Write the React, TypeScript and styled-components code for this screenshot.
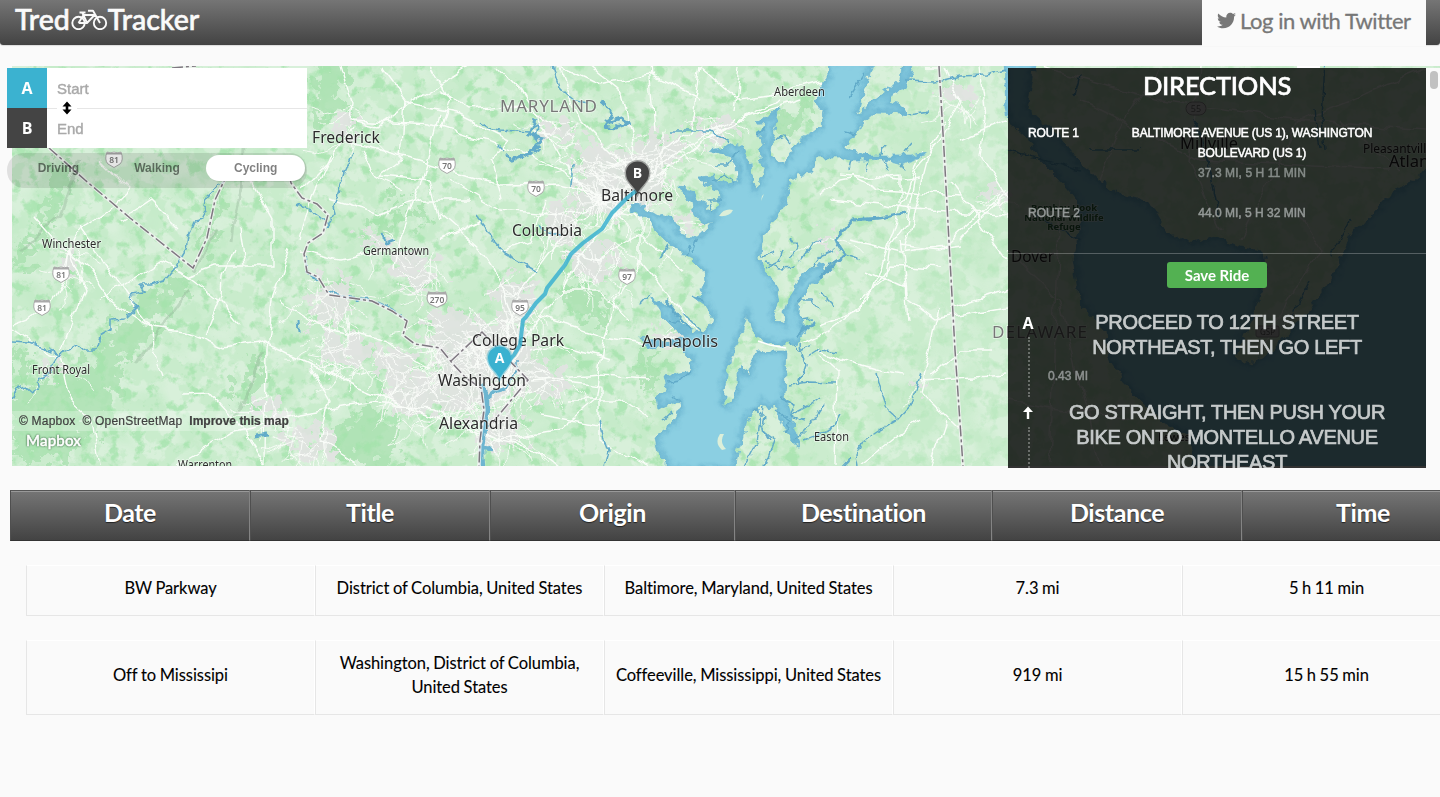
import React from "react";
import styled, { createGlobalStyle, css } from "styled-components";
import { FaTwitter } from "react-icons/fa";

const GlobalStyle = createGlobalStyle`
  * { box-sizing: border-box; }
  html, body { margin: 0; padding: 0; background: #fafafa; overflow: hidden; }
  body { font-family: Lato, "Liberation Sans", sans-serif; color: #000; font-variant-ligatures: none; }
`;

const helvetica = `"Liberation Sans", Arial, sans-serif`;

const Page = styled.div`
  height: 797px;
  width: 1440px;
  overflow: hidden;
`;

const Header = styled.header`
  display: flex;
  justify-content: space-between;
  height: 45px;
  padding: 0 14px 0 15px;
  background: linear-gradient(#757575, #434343);
  border-radius: 0 0 3px 3px;
  box-shadow: 0 1px 1px rgba(0, 0, 0, 0.12);
`;

const Brand = styled.a`
  display: flex;
  align-items: flex-start;
  height: 40px;
  font-size: 28.5px;
  line-height: 39px;
  font-weight: 500;
  color: #fafafa;
  -webkit-text-stroke: 0.6px #fafafa;
`;

const BikeIcon = styled.svg`
  width: 37px;
  height: 22px;
  margin: 8px 0 0 1px;
  fill: none;
  stroke: #fafafa;
`;

const LoginTab = styled.a`
  display: flex;
  align-items: center;
  gap: 4px;
  width: 224px;
  height: 46px;
  padding: 0 0 5px 15px;
  background: #fafafa;
  color: #777;
  font-size: 22px;
  letter-spacing: -0.46px;
  white-space: nowrap;
  -webkit-text-stroke: 0.3px #777;
`;

const MapStage = styled.section`
  position: relative;
  height: 400px;
  margin: 21px 0 0 12px;
`;

const MapCanvas = styled.svg`
  display: block;
  width: 1428px;
  height: 400px;
  font-family: "Noto Sans", sans-serif;
`;

const Inputs = styled.div`
  position: absolute;
  left: -5px;
  top: 2px;
  width: 300px;
`;

const InputRow = styled.label`
  display: flex;
  height: 40px;
  background: #fff;
  & + & > span:last-child { border-top: 1px solid #e6e6e6; line-height: 39px; }
`;

const Letter = styled.span<{ $color: string }>`
  width: 40px;
  background: ${(p) => p.$color};
  color: #fff;
  font: bold 16px/40px "Open Sans", sans-serif;
  text-align: center;
`;

const Placeholder = styled.span`
  flex: 1;
  padding-left: 10px;
  font: 15px/41px ${helvetica};
  color: #a9a9a9;
  -webkit-text-stroke: 0.4px #a9a9a9;
`;

const SwapIcon = styled.svg`
  position: absolute;
  left: 50px;
  top: 30px;
  width: 20px;
  height: 20px;
  background: #fff;
`;

const Modes = styled.div`
  display: flex;
  height: 35px;
  margin-top: 5px;
  padding: 2px;
  border-radius: 17px;
  background: rgba(0, 0, 0, 0.1);
`;

const Mode = styled.span<{ $active?: boolean }>`
  flex: 1;
  height: 26px;
  border-radius: 13px;
  text-align: center;
  font: bold 12px/26px ${helvetica};
  color: rgba(0, 0, 0, 0.5);
  ${(p) => p.$active && css`background: #fff; box-shadow: 1px 1px 1px rgba(0,0,0,.1);`}
`;

const Attribution = styled.div`
  position: absolute;
  left: 0;
  top: 345px;
  display: flex;
  gap: 7px;
  width: 283px;
  height: 20px;
  padding-left: 7px;
  background: rgba(255, 255, 255, 0.25);
  font: 12px/20px ${helvetica};
  letter-spacing: 0.2px;
  color: #404040;
  white-space: nowrap;
  -webkit-text-stroke: 0.2px #404040;
  b { letter-spacing: 0; }
`;

const Logo = styled.div`
  position: absolute;
  left: 14px;
  top: 365px;
  font: 500 15px/18px Lato, sans-serif;
  color: #fff;
  letter-spacing: 0.2px;
  -webkit-text-stroke: 0.5px #fff;
  text-shadow: 0 0 2px #5d8663, 0 0 2px #5d8663, 0 0 2px #6c9a72, 0 0 2px #6c9a72;
`;

const ScrollTrack = styled.div`
  position: absolute;
  left: 1414px;
  top: 2px;
  width: 14px;
  height: 400px;
  padding: 3px;
  background: #fafafa;
  &::before {
    content: "";
    display: block;
    width: 8px;
    height: 18px;
    margin-left: 1px;
    border-radius: 4px;
    background: #c1c1c1;
  }
`;

const Panel = styled.aside`
  position: absolute;
  left: 996px;
  top: 2px;
  width: 418px;
  height: 400px;
  overflow: hidden;
  background: rgba(0, 0, 0, 0.8);
  color: #fff;
  text-transform: uppercase;
`;

const PanelTitle = styled.h2`
  margin: 0;
  height: 55px;
  font: 500 25.5px/35px Lato, sans-serif;
  letter-spacing: -0.2px;
  text-align: center;
  -webkit-text-stroke: 0.6px #fff;
`;

const Route = styled.div<{ $active?: boolean }>`
  display: flex;
  height: ${(p) => (p.$active ? 80 : 50)}px;
  padding-left: 20px;
  font: 12px/20px ${helvetica};
  letter-spacing: ${(p) => (p.$active ? "-0.17px" : "0")};
  color: ${(p) => (p.$active ? "#fff" : "#939896")};
  -webkit-text-stroke: 0.5px currentColor;
  em { display: block; font-style: normal; color: #858b88; letter-spacing: 0.08px; }
`;

const RouteName = styled.span`
  width: 90px;
`;

const RouteText = styled.span`
  width: 268px;
  text-align: center;
  white-space: nowrap;
`;

const SaveBar = styled.div`
  display: flex;
  justify-content: center;
  height: 54px;
  padding-top: 8px;
  border-top: 1px solid rgba(255, 255, 255, 0.25);
`;

const SaveButton = styled.button`
  width: 100px;
  height: 26px;
  padding: 0;
  border: 0;
  border-radius: 3px;
  background: #53b152;
  color: #fff;
  font: bold 15px/26px Lato, sans-serif;
  letter-spacing: -0.05px;
`;

const Step = styled.div`
  display: flex;
  height: 90px;
  padding-left: 10px;
`;

const StepMark = styled.div`
  display: flex;
  flex-direction: column;
  align-items: center;
  width: 20px;
  padding-top: 6px;
  font: bold 16px/20px "Open Sans", sans-serif;
  &::after {
    content: "";
    flex: 1;
    margin: 4px 0 0 2px;
    border-left: 2px dotted rgba(255, 255, 255, 0.3);
  }
`;

const ArrowIcon = styled.svg`
  width: 20px;
  height: 20px;
  flex: none;
`;

const StepBody = styled.div`
  width: 378px;
`;

const StepText = styled.div`
  padding-top: 3px;
  font: 20px/25px ${helvetica};
  letter-spacing: -0.32px;
  color: #c6caca;
  text-align: center;
  white-space: nowrap;
  -webkit-text-stroke: 0.7px #c6caca;
`;

const StepLength = styled.div`
  margin: 6px 0 0 10px;
  font: 12px/20px ${helvetica};
  color: #8d9190;
  -webkit-text-stroke: 0.5px #8d9190;
`;

const TableHead = styled.div`
  display: flex;
  width: 1480px;
  height: 51px;
  margin: 24px 0 24px 10px;
`;

const HeadCell = styled.div<{ $width: number }>`
  flex: none;
  width: ${(p) => p.$width}px;
  border: 1px solid;
  border-color: #555 #848484 #333 #4f4f4f;
  background: linear-gradient(#757575, #434343);
  box-shadow: inset 0 1px 0 #999;
  font-size: 25px;
  font-weight: bold;
  line-height: 43px;
  color: #fff;
  text-align: center;
  text-shadow: 0 1px 1px rgba(0, 0, 0, 0.6);
  letter-spacing: -0.4px;
`;

const Row = styled.div<{ $height: number }>`
  display: flex;
  width: 1445px;
  height: ${(p) => p.$height}px;
  margin: 0 0 24px 26px;
`;

const Cell = styled.div`
  flex: none;
  display: flex;
  align-items: center;
  justify-content: center;
  width: 289px;
  padding: 0 8px 5px;
  border: 1px solid #e6e6e6;
  border-top-color: #fff;
  border-right-color: #fff;
  font-size: 16.5px;
  line-height: 24px;
  letter-spacing: -0.06px;
  word-spacing: -0.5px;
  text-align: center;
  -webkit-text-stroke: 0.1px #000;
`;

/* ---------- map geography ---------- */

const BAY =
  "M827 60L828 77 820 87 815 103 823 110 821 126 812 133 800 139 793 150 784 164 775 160 771 150 774 136 777 122 778 108 770 116 757 120 764 126 759 134 763 145 759 158 765 168 762 180 755 188 751 174 750 163 742 148 730 142 722 148 707 150 718 153 730 156 737 166 738 180 728 184 712 176 698 177 706 184 718 190 719 204 713 213 698 200 690 188 678 187 684 196 693 203 695 214 703 224 713 222 707 229 697 238 680 234 672 218 662 215 652 212 640 205 630 203 633 212 648 219 656 231 668 243 676 248 687 257 693 260 703 270 704 288 698 300 706 306 714 318 712 323 703 332 695 331 682 326 672 308 660 302 650 297 655 305 662 316 674 328 685 336 668 341 652 340 640 338 646 346 658 350 672 345 680 348 692 360 690 371 680 373 664 376 667 390 657 398 659 410 672 402 679 403 680 410 673 423 655 437 658 453 667 462 667 470 735 470 738 453 741 442 744 432 748 416 757 410 762 402 768 410 776 405 780 420 790 440 800 447 793 425 785 397 786 372 787 351 768 351 758 352 752 362 748 375 742 365 737 375 737 390 731 403 724 405 724 390 729 366 733 352 737 343 743 330 747 314 752 331 758 337 770 343 783 345 790 343 798 345 801 337 807 329 800 320 799 312 800 300 806 292 817 282 826 272 822 264 812 268 800 278 795 290 787 300 784 312 785 324 778 322 773 317 774 310 780 300 778 290 773 282 768 272 762 266 761 256 763 240 768 232 777 217 783 208 787 193 790 185 797 175 812 173 812 167 818 157 840 157 850 160 868 160 882 159 900 164 918 158 928 152 910 155 880 155 866 155 845 148 847 142 858 135 863 123 875 112 900 113 908 116 900 104 888 102 892 95 903 88 910 78 914 60 903 60 900 80 883 93 870 103 857 118 860 105 865 86 868 78 873 60Z";

const DEL =
  "M1004 60L1006 110 1008 120 1027 137 1040 160 1060 180 1077 200 1080 226 1073 260 1080 303 1107 332 1110 360 1130 390 1163 423 1190 437 1196 480 1445 480 1445 162 1426 170 1403 187 1387 197 1360 227 1353 230 1343 255 1330 280 1307 313 1273 350 1250 364 1235 358 1247 330 1267 280 1263 250 1240 247 1217 237 1190 243 1167 233 1150 203 1117 193 1083 167 1060 137 1027 110 1032 77 1037 60Z";

const RIVERS = [
  "M12 400L16 389 25 386 33 393 39 387 38 380 47 375 52 366 60 353 72 348 78 345 84 350 96 350 100 336 110 330 110 320 125 319 138 307 130 299 131 294 145 292 140 284 150 284 165 280 175 268 186 250 188 236 194 222 203 220 207 212 203 206 205 198 218 186 232 174 246 160",
  "M12 342L30 343 60 355", "M354 152L345 172 338 193 334 206 336 213 330 222 325 228",
  "M297 204L312 211 328 224", "M305 255L307 272 318 280", "M328 291L350 298 372 300 392 309 407 320",
  "M553 66L557 78 560 88 566 94 575 101 588 103", "M480 123L488 128 500 130 515 131 530 132 538 124 536 142",
  "M498 145L503 150 M476 215L487 229 493 240 505 253 520 262 538 272", "M670 131L690 131 710 131 730 141",
  "M538 225L548 233 560 235 M573 165L571 185 M600 420L604 440 608 452 604 466",
  "M820 276L832 263 845 255 860 260 M820 292L834 306",
  "M820 350L837 353 M877 373L881 390 888 410 897 418 M921 373L916 390 910 406 897 420 880 430 862 442 856 455 858 466",
  "M905 81L935 82 960 76 985 75 1006 70", "M795 440L810 425 824 405 M790 385L808 382 835 383 M790 415L808 406 820 397",
  "M800 345L805 365 798 385 M808 356L820 348 M775 410L790 420 785 432 M762 405L760 425 770 440",
  "M745 465L757 442 760 420 M765 466L775 438 M805 440L830 430 840 414 M850 458L843 466",
  "M703 332L692 322 683 313 M650 293L640 304 M703 300L692 296 M680 323L670 320",
  "M790 238L798 246 790 260 M800 261L812 244 820 240 M765 262L780 268 795 267 M850 96L865 74",
  "M908 115L930 112 M1008 150L1080 170 M1035 215L1080 240 M1315 110L1320 150 M1325 60L1322 120 1325 150 M1195 120L1210 170 1220 220",
  "M1075 95L1080 75 M1090 150L1140 150 M1290 320L1310 280 M1330 255L1350 220",
  "M690 371L680 380 668 382 M680 403L672 395 M672 412L663 420 M755 410L765 418 762 430 775 440 M780 398L795 405 790 415 805 420 M812 268L822 255 835 250",
  "M790 343L800 350 812 345 M797 300L810 300 820 310 M800 320L812 318 M762 256L775 252 M766 268L778 262 782 250 M868 160L866 172 M882 159L888 170 M900 164L905 172 M850 160L848 170 M905 152L912 144 M880 155L885 145 M845 132L858 136",
  "M738 150L728 165 715 165 M735 183L725 175 712 182 M713 213L708 200 722 200 M697 238L692 252 M686 257L690 244 M668 245L660 258 M765 128L758 135 M775 140L785 135 790 142",
];

const BORDERS = [
  "M49 148L85 180 130 218 193 268 207 238 215 200 231 166 240 160 252 164 288 171 291 183 302 198 317 204 328 215 323 233 308 243 304 254 307 272 318 277 329 295 372 301 392 311 407 321 403 335 415 344 440 348 453 364 466 378 481 388 484 410 480 440 479 466",
  "M172 68L196 66", "M451 361L482 332 528 380 493 422", "M939 66L944 150 950 260 955 350 963 466",
];

const ROADS = [
  "M12 326L28 320 52 302 64 280 68 250 76 234 110 210",
  "M33 215L62 248 90 270 110 300 151 328 185 332 222 347 260 341 310 364 360 387 430 415 500 440",
  "M151 328L80 228 M151 328L152 350 162 378 M12 330L30 342 60 356 70 400 92 420 100 466",
  "M68 250L85 290 62 350 M100 300L160 262 190 276 215 266 272 266 272 220 250 180",
  "M180 270L220 300 240 325 M233 250L222 275 221 295 205 336 M265 466L266 348 272 300 290 250",
  "M180 393L210 392 240 425 265 466 M175 466L230 433 300 415 372 402 430 407 500 440",
  "M340 66L352 105 350 120 378 126 408 104 380 66 M354 126L330 160 300 190 M345 142L420 160 500 185 560 184 620 198",
  "M352 120L430 124 500 145 560 170 600 195 M408 104L460 115 510 140 M408 104L470 66 M405 100L401 160 380 176 430 180 440 220",
  "M330 155L310 200 300 240 M360 150L375 175 400 190 M440 115L422 180 400 240 395 270",
  "M498 66L520 90 535 115 560 160 595 200 625 220 M700 66L740 100 770 96 820 82 M690 150L740 120 800 100 M625 190L690 145 735 118",
  "M637 190L632 140 620 90 590 66 M637 190L720 130 780 100 M600 200L560 240 520 290 505 340 490 380",
  "M637 200L600 230 578 260 558 296 530 330 505 375 M450 180L500 210 560 215 620 200",
  "M560 66L580 120 610 150 640 180 M440 215L480 250 500 280 520 340 M530 380L600 375 650 378",
  "M640 210L640 260 615 300 605 335 595 400 560 430 500 440 M640 260L680 310 705 340 M800 345L830 330 870 300 920 150",
  "M540 315L600 335 650 345 M560 250L600 260 640 235 680 270 M500 400L560 380 600 385 600 440 650 466 M540 415L600 425 M493 440L540 450 560 466",
  "M840 175L870 178 900 175 900 205 M820 195L840 180 850 178 M830 200L880 205 910 210 1008 215",
  "M945 66L960 100 940 140 915 170 905 225 890 245 885 280 860 300 M875 175L905 180 920 178 M980 66L986 120 981 155 1000 185 1008 200",
  "M820 325L860 310 890 265 940 268 M850 240L900 252 960 244 M900 240L908 300 935 320 1008 307 M865 270L905 288 M905 285L908 320",
  "M820 350L840 360 875 370 905 375 M925 66L940 66 M940 310L930 350 920 390 940 410 960 430 M820 355L837 370 835 466 M920 380L1008 375",
  "M850 175L880 190 960 195 M1000 195L940 250 900 245 M950 180L1008 260 M960 140L1008 120 M960 240L1008 190",
  "M945 120L930 150 905 250 M950 310L1008 290 M920 420L860 466 M945 420L930 466 M990 350L960 350 932 375",
  "M1040 66L1160 100 1300 120 1426 130 M1160 66L1120 130 1100 180 M1200 66L1190 160 1220 230 M1426 70L1300 120 1240 240 M1080 100L1200 160 1390 170",
  "M1008 250L1060 300 1100 466 M1060 200L1050 466 M1008 400L1130 420 M1340 120L1400 170 M1290 200L1320 250 1260 350",
  "M440 90L470 110 520 105 560 130 M430 66L450 100 440 130 M560 66L600 85 650 75 700 100 M650 66L655 130 M700 66L690 130 640 170 M740 66L735 110 M120 220L150 200 180 230 M100 160L130 190 110 210",
  "M280 300L330 330 380 340 430 370 M300 250L340 260 390 250 M330 200L380 215 420 200 470 200 M240 230L245 265 M310 364L330 400 320 440 360 466",
  "M530 350L560 345 610 360 M570 400L620 400 650 420 M560 290L600 290 630 320 M500 200L490 160 510 140 M545 200L530 240 500 250 M440 240L480 220",
];

const PARKS = [
  "M315 66L350 66 345 90 330 115 325 130 315 115Z", "M140 300L185 270 195 282 160 320 120 365 95 380 80 370Z",
  "M12 345L30 355 30 380 12 390Z", "M560 290L590 287 605 300 605 325 590 325 565 305Z", "M776 117L812 100 814 115 798 132 785 136Z",
  "M410 200L430 210 428 226 410 215Z M375 215L395 190 400 215 375 240Z", "M340 420L380 405 400 450 390 466 360 466 330 450Z",
  "M195 250L215 190 225 190 205 260Z", "M60 370L120 370 110 420 60 460 12 460 12 400Z", "M240 385L265 340 262 380 240 405Z",
  "M12 260L40 220 60 160 75 170 40 240 20 275Z", "M640 360L660 350 655 390 640 400Z",
];

const URBANS: [number, number, number, number][] = [
  [632, 180, 43, 36], [600, 195, 34, 24], [655, 150, 33, 18], [715, 130, 28, 12], [595, 260, 30, 22],
  [470, 375, 45, 42], [500, 350, 42, 34], [450, 330, 33, 28], [515, 300, 24, 30], [415, 270, 26, 22],
  [345, 350, 34, 20], [325, 310, 26, 18], [395, 365, 24, 20], [420, 395, 35, 28], [335, 290, 22, 13],
  [345, 125, 13, 19], [68, 262, 10, 24], [270, 410, 20, 13], [310, 440, 30, 18], [55, 365, 6, 10],
  [555, 130, 26, 12], [560, 225, 22, 22], [665, 335, 14, 10], [960, 95, 20, 12], [998, 195, 14, 8], [920, 388, 7, 6],
  [830, 240, 5, 10], [540, 380, 32, 20], [500, 430, 30, 20], [375, 240, 18, 8], [690, 225, 14, 10], [590, 160, 20, 20],
];

/* Small street grid segments scattered through the built-up areas. */
function streets(): string {
  let seed = 11;
  const rnd = () => ((seed = (seed * 16807) % 2147483647) / 2147483647);
  let d = "";
  URBANS.forEach(([cx, cy, rx, ry]) => {
    const n = Math.round((rx * ry) / 30);
    for (let i = 0; i < n; i++) {
      const a = rnd() * 6.28;
      const r = Math.sqrt(rnd()) * 1.1;
      const x = cx + Math.cos(a) * rx * r;
      const y = cy + Math.sin(a) * ry * r;
      const t = rnd() * 3.14;
      const l = 8 + rnd() * 22;
      d += `M${x.toFixed(1)} ${y.toFixed(1)}l${(Math.cos(t) * l).toFixed(1)} ${(Math.sin(t) * l).toFixed(1)}`;
      d += `l${(Math.cos(t + 0.5) * l * 0.5).toFixed(1)} ${(Math.sin(t + 0.5) * l * 0.5).toFixed(1)}`;
    }
  });
  return d;
}

const STREETS = streets();

type Place = [string, number, number, number, number];
const PLACES: Place[] = [
  ["Frederick", 312, 143, 68, 16.5], ["Winchester", 42, 248, 59, 12.2], ["Front Royal", 32, 374, 58, 12.2],
  ["Germantown", 363, 255, 66, 12.2], ["Columbia", 512, 236, 70, 16.5], ["Baltimore", 601, 201, 72, 16.5],
  ["Aberdeen", 774, 96, 51, 12.2], ["College Park", 472, 346, 92, 16], ["Washington", 438, 386, 88, 16.5],
  ["Alexandria", 439, 429, 79, 16.5], ["Annapolis", 642, 347, 76, 16.5], ["Easton", 814, 441, 35, 12.2],
  ["Warrenton", 178, 469, 54, 12.2], ["Dover", 1011, 262, 43, 16], ["Millville", 1180, 149, 58, 16],
  ["Pleasantville", 1363, 153, 70, 12], ["Atlantic City", 1389, 167, 92, 16], ["Lewes", 1158, 441, 32, 11],
];

const SHIELDS: [string, number, number][] = [
  ["81", 114, 159], ["81", 61, 274], ["81", 42, 307], ["70", 447, 165], ["70", 536, 188], ["270", 437, 299], ["95", 520, 307], ["97", 627, 276],
];

const Shield = ({ n, x, y }: { n: string; x: number; y: number }) => {
  const s = n.length > 2 ? 1.2 : 1;
  return (
    <g transform={`translate(${x} ${y})`}>
      <path transform={`scale(${s} 1)`} d="M-7 -7Q-3.500 -5.500 0 -7Q3.500 -5.500 7 -7Q10 1 6 5L0 8.500L-6 5Q-10 1 -7 -7Z" fill="#fff" stroke="#a9a9a9" />
      <path transform={`scale(${s} 1)`} d="M-7 -7Q0 -5.500 7 -7L7.800 -4.500H-7.800Z" fill="#aaa" />
      <text y="4" fontSize="8.500" fontWeight="600" textAnchor="middle" fill="#777">{n}</text>
    </g>
  );
};

const Pin = ({ x, y, color, letter }: { x: number; y: number; color: string; letter: string }) => (
  <g transform={`translate(${x} ${y})`}>
    <path d="M0 16.500C-3 9 -11.500 5.500 -11.500 -4A11.500 11.500 0 0 1 11.500 -4C11.500 5.500 3 9 0 16.500Z" fill={color} stroke={color} strokeOpacity=".45" strokeWidth="3" />
    <text y="1" fontSize="14" fontWeight="bold" textAnchor="middle" fill="#fff" fontFamily="Open Sans">{letter}</text>
  </g>
);

const RegionMap = () => (
  <MapCanvas viewBox="12 66 1428 400">
    <defs>
      <filter id="terrain" x="0" y="0" width="100%" height="100%" colorInterpolationFilters="sRGB">
        <feTurbulence type="fractalNoise" baseFrequency="0.075" numOctaves="5" seed="8" />
        <feColorMatrix values="0 0 0 0 0.640  0 0 0 0 0.890  0 0 0 0 0.670  6 0 0 0 -3.300" />
      </filter>
      <filter id="meadow" x="0" y="0" width="100%" height="100%" colorInterpolationFilters="sRGB">
        <feTurbulence type="fractalNoise" baseFrequency="0.055" numOctaves="5" seed="31" />
        <feColorMatrix values="0 0 0 0 0.770  0 0 0 0 0.920  0 0 0 0 0.785  0 10 0 0 -4.700" />
      </filter>
      <filter id="relief" x="0" y="0" width="100%" height="100%" colorInterpolationFilters="sRGB">
        <feTurbulence type="fractalNoise" baseFrequency="0.018" numOctaves="3" seed="21" />
        <feColorMatrix values="0 0 0 0 0.720  0 0 0 0 0.910  0 0 0 0 0.740  0 6 0 0 -2.900" />
      </filter>
      <filter id="coast" x="-2%" y="-2%" width="104%" height="104%" colorInterpolationFilters="sRGB">
        <feTurbulence type="fractalNoise" baseFrequency="0.13" numOctaves="2" seed="3" />
        <feDisplacementMap in="SourceGraphic" scale="10" xChannelSelector="R" yChannelSelector="G" />
      </filter>
      <filter id="stream" x="-2%" y="-2%" width="104%" height="104%" colorInterpolationFilters="sRGB">
        <feTurbulence type="fractalNoise" baseFrequency="0.13" numOctaves="2" seed="3" />
        <feDisplacementMap in="SourceGraphic" scale="7" xChannelSelector="R" yChannelSelector="G" />
      </filter>
      <filter id="wiggle" x="-2%" y="-2%" width="104%" height="104%" colorInterpolationFilters="sRGB">
        <feTurbulence type="fractalNoise" baseFrequency="0.05" numOctaves="2" seed="5" />
        <feDisplacementMap in="SourceGraphic" scale="12" xChannelSelector="R" yChannelSelector="G" />
      </filter>
      <filter id="rough" x="-30%" y="-30%" width="160%" height="160%" colorInterpolationFilters="sRGB">
        <feTurbulence type="fractalNoise" baseFrequency="0.08" numOctaves="4" seed="9" />
        <feDisplacementMap in="SourceGraphic" scale="50" xChannelSelector="R" yChannelSelector="G" />
      </filter>
      <filter id="soft" colorInterpolationFilters="sRGB"><feGaussianBlur stdDeviation="2.500" /></filter>
      <clipPath id="water"><path d={BAY} /><path d={DEL} /></clipPath>
      <linearGradient id="fade" x1="0" x2="1">
        <stop offset="0.560" stopColor="#fff" /><stop offset="0.640" stopColor="#666" /><stop offset="1" stopColor="#444" />
      </linearGradient>
      <mask id="west"><rect x="12" y="66" width="1428" height="400" fill="url(#fade)" /></mask>
    </defs>
    <rect x="12" y="66" width="1428" height="400" fill="#d8f0da" />
    <rect x="12" y="66" width="1428" height="400" filter="url(#relief)" opacity=".4" />
    <rect x="12" y="66" width="1428" height="400" filter="url(#meadow)" opacity=".75" />
    <g filter="url(#rough)" fill="#a3dfaa" opacity=".65">{PARKS.map((d) => <path key={d} d={d} />)}</g>
    <g mask="url(#west)"><rect x="12" y="66" width="1428" height="400" filter="url(#terrain)" opacity=".75" /></g>
    <g filter="url(#rough)" fill="#e3e3e3" opacity=".85">
      {URBANS.map(([cx, cy, rx, ry]) => <ellipse key={`${cx}-${cy}`} cx={cx} cy={cy} rx={rx * 0.84} ry={ry * 0.84} />)}
    </g>
    <g fill="none" stroke="#8fae94" strokeWidth="3" opacity=".35" filter="url(#wiggle)">
      <path d="M262 350L250 385 235 415M244 150L242 190 232 225 230 240M135 365L160 330 190 290M80 160L60 215 22 250M215 230L196 270" />
    </g>
    <g filter="url(#wiggle)" fill="none" stroke="#fafdf9">
      <path d={STREETS} strokeWidth="1" opacity=".85" />
      {ROADS.map((d) => <path key={d} d={d} strokeWidth="1.400" />)}
    </g>
    <g filter="url(#coast)">
      <path d={BAY} fill="#8bcfe2" stroke="#7cc0d8" strokeWidth=".8" />
      <path d={DEL} fill="#8bcfe2" stroke="#7cc0d8" strokeWidth=".8" />
      <g clipPath="url(#water)" opacity=".6">
        <path d={BAY} fill="none" stroke="#5aa6c6" strokeWidth="6" filter="url(#soft)" />
        <path d={DEL} fill="none" stroke="#5aa6c6" strokeWidth="6" filter="url(#soft)" />
      </g>
      <path d="M600 103L612 112 608 122 620 118 630 124 615 128 605 126M505 154L512 160 540 150M535 120L530 135 543 138 533 150" fill="none" stroke="#62abc9" strokeWidth="3" />
    </g>
    <g filter="url(#stream)" fill="none" stroke="#62abc9" strokeWidth="1.500" strokeLinejoin="round">
      {RIVERS.map((d) => <path key={d} d={d} />)}
      <path d="M382 233L386 243 394 240M298 320L299 332M255 436L268 434" strokeWidth="3" />
      <path d="M907 212L880 218 853 220 835 240 845 255 820 277M795 336L815 322M665 300L690 330" strokeWidth="3" />
      <path d="M481 384L486 396 486 410 484 430 482 448 483 470M486 398L495 391 506 388M483 448L492 449" stroke="#6db5d0" strokeWidth="4.500" />
      <path d="M506 388L512 378 517 368 517 360" />
    </g>
    <path d="M719 216Q724 208 733 210Q730 217 719 216ZM720 434Q714 443 722 450L726 449Q719 442 724 434ZM761 201L764 194 762 196Z" fill="#dcefd9" />
    <path d="M758 341L770 345 786 348" stroke="#fff" strokeWidth="1.500" fill="none" />
    <g fill="none">
      {BORDERS.map((d) => <path key={d} d={d} stroke="#f4f4f4" strokeWidth="3.500" opacity=".8" />)}
      {BORDERS.map((d) => <path key={d} d={d} stroke="#7e7880" strokeWidth="1.500" strokeDasharray="11 3 3 3" />)}
    </g>
    {SHIELDS.map(([n, x, y]) => <Shield key={`${x}`} n={n} x={x} y={y} />)}
    <rect x="1186" y="102" width="20" height="13" rx="6.500" fill="#ddd" stroke="#999" />
    <text x="1196" y="112" fontSize="9" textAnchor="middle" fill="#777">55</text>
    <rect x="1256" y="326" width="23" height="11" rx="2" fill="#ccc" stroke="#999" />
    <text x="1267.500" y="335" fontSize="8" textAnchor="middle" fill="#666">GSP</text>
    <g fill="#2b2b2b" stroke="#fff" strokeOpacity=".55" strokeWidth="1.500" paintOrder="stroke">
      {PLACES.map(([name, x, y, w, size]) => (
        <text key={name} x={x} y={y} fontSize={size} textLength={w} lengthAdjust="spacingAndGlyphs">{name}</text>
      ))}
      <text x="500" y="112" fontSize="17" textLength="97" fill="#777">MARYLAND</text>
      <text x="992" y="338" fontSize="17" textLength="95" fill="#777">DELAWARE</text>
      <g fontSize="9.500" fontWeight="bold" fill="#2d6b3c" textAnchor="middle">
        <text x="1064" y="211">Bombay Hook</text>
        <text x="1064" y="221">National Wildlife</text>
        <text x="1064" y="230">Refuge</text>
      </g>
    </g>
    <path d="M499 376L506 364 514 355 520 345 523 320 526 317 536 303 545 294 547 288 565 265 571 254 583 243 602 229 612 213 627 198 637 190" fill="none" stroke="#3bb2d0" strokeWidth="4" strokeOpacity=".85" strokeLinejoin="round" />
    <Pin x={637.5} y={177} color="#444" letter="B" />
    <Pin x={499.5} y={362} color="#3bb2d0" letter="A" />
    <rect x="1297" y="66" width="23" height="2" fill="#fff" />
  </MapCanvas>
);

const HEADS: [string, number][] = [["Date", 240], ["Title", 240], ["Origin", 245], ["Destination", 257], ["Distance", 250], ["Time", 242]];

const RIDES = [
  { h: 51, cells: ["BW Parkway", "District of Columbia, United States", "Baltimore, Maryland, United States", "7.3 mi", "5 h 11 min"] },
  { h: 75, cells: ["Off to Mississipi", "Washington, District of Columbia, United States", "Coffeeville, Mississippi, United States", "919 mi", "15 h 55 min"] },
];

export default function App() {
  return (
    <Page>
      <GlobalStyle />
      <Header>
        <Brand>
          Tred
          <BikeIcon viewBox="0 0 37 22" strokeWidth="1.900" strokeLinejoin="round">
            <circle cx="7.500" cy="15" r="6.200" />
            <circle cx="29" cy="15" r="6.200" />
            <path d="M7.500 15L12.500 7 23.500 7 16 15H7.500M11.500 5L16 15M8.500 4.500H14.500M17 2.800H22L29 15" />
          </BikeIcon>
          Tracker
        </Brand>
        <LoginTab>
          <FaTwitter size={19} />
          Log in with Twitter
        </LoginTab>
      </Header>

      <MapStage>
        <RegionMap />
        <Inputs>
          <InputRow><Letter $color="#3bb2d0">A</Letter><Placeholder>Start</Placeholder></InputRow>
          <InputRow><Letter $color="#444">B</Letter><Placeholder>End</Placeholder></InputRow>
          <SwapIcon viewBox="0 0 20 20"><path d="M10 3.500L14.500 8.500H11.300V11.500H14.500L10 16.500 5.500 11.500H8.700V8.500H5.500Z" /></SwapIcon>
          <Modes>
            <Mode>Driving</Mode>
            <Mode>Walking</Mode>
            <Mode $active>Cycling</Mode>
          </Modes>
        </Inputs>
        <Attribution><span>© Mapbox</span><span>© OpenStreetMap</span><b>Improve this map</b></Attribution>
        <Logo>Mapbox</Logo>
        <Panel>
          <PanelTitle>Directions</PanelTitle>
          <Route $active>
            <RouteName>Route 1</RouteName>
            <RouteText>Baltimore Avenue (US 1), Washington<br />Boulevard (US 1)<em>37.3 mi, 5 h 11 min</em></RouteText>
          </Route>
          <Route>
            <RouteName>Route 2</RouteName>
            <RouteText>44.0 mi, 5 h 32 min</RouteText>
          </Route>
          <SaveBar><SaveButton>Save Ride</SaveButton></SaveBar>
          <Step>
            <StepMark>A</StepMark>
            <StepBody>
              <StepText>Proceed to 12th Street<br />Northeast, then go left</StepText>
              <StepLength>0.43 mi</StepLength>
            </StepBody>
          </Step>
          <Step>
            <StepMark>
              <ArrowIcon viewBox="0 0 20 20"><path d="M10 3.500L15 9H11.200V16H8.800V9H5Z" fill="#fff" /></ArrowIcon>
            </StepMark>
            <StepBody>
              <StepText>Go straight, then push your<br />bike onto Montello Avenue<br />Northeast</StepText>
            </StepBody>
          </Step>
        </Panel>
        <ScrollTrack />
      </MapStage>

      <TableHead>
        {HEADS.map(([name, w]) => <HeadCell key={name} $width={w}>{name}</HeadCell>)}
      </TableHead>
      {RIDES.map((ride) => (
        <Row key={ride.cells[0]} $height={ride.h}>
          {ride.cells.map((c) => <Cell key={c}>{c}</Cell>)}
        </Row>
      ))}
    </Page>
  );
}
